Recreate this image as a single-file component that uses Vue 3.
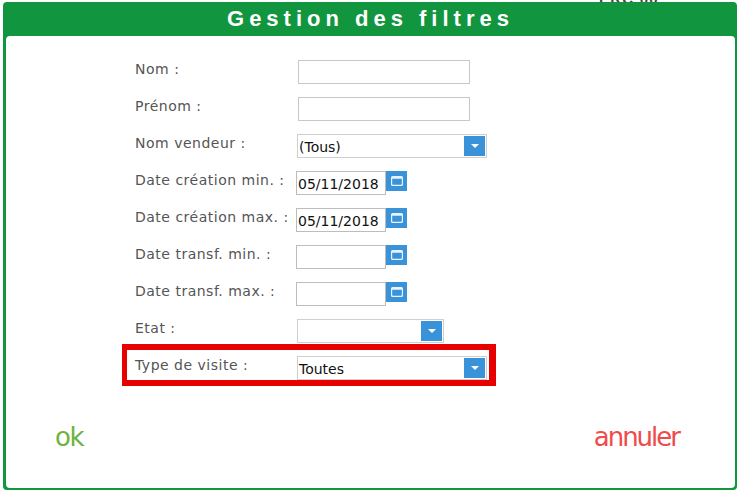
<template>
  <div class="page">
    <span class="behind">ERC 00</span>
    <section class="panel">
      <h1 class="panel-title">Gestion des filtres</h1>
      <div class="panel-body">
        <form class="filters">
          <div v-for="row in rows" :key="row.label" class="row" :class="{ marked: row.marked }">
            <label class="row-label">{{ row.label }}</label>

            <div v-if="row.type === 'text'" class="text-box"></div>

            <div v-else-if="row.type === 'select'" class="select-box" :class="row.size">
              <span class="select-value">{{ row.value }}</span>
              <span class="select-btn">
                <svg width="10" height="6" viewBox="0 0 10 6"><path d="M1 1h8L5 5z" fill="#fff" /></svg>
              </span>
            </div>

            <div v-else class="date-field">
              <div class="date-box">{{ row.value }}</div>
              <span class="date-btn">
                <svg width="12" height="10" viewBox="0 0 12 10">
                  <path d="M1.5 0h9A1.5 1.5 0 0 1 12 1.5v7A1.5 1.5 0 0 1 10.500 10h-9A1.500 1.500 0 0 1 0 8.500v-7A1.500 1.500 0 0 1 1.500 0zM1.200 2.800v5.200c0 .5.3.8.8.8h8c.5 0 .8-.3.8-.8V2.800z" fill="#e8f3fc" fill-rule="evenodd" />
                </svg>
              </span>
            </div>
          </div>
        </form>

        <div class="actions">
          <a class="action ok">ok</a>
          <a class="action cancel">annuler</a>
        </div>
      </div>
    </section>
  </div>
</template>

<script setup>
const rows = [
  { label: 'Nom :', type: 'text' },
  { label: 'Prénom :', type: 'text' },
  { label: 'Nom vendeur :', type: 'select', value: '(Tous)', size: 'wide' },
  { label: 'Date création min. :', type: 'date', value: '05/11/2018' },
  { label: 'Date création max. :', type: 'date', value: '05/11/2018' },
  { label: 'Date transf. min. :', type: 'date', value: '' },
  { label: 'Date transf. max. :', type: 'date', value: '' },
  { label: 'Etat :', type: 'select', value: '', size: 'narrow' },
  { label: 'Type de visite :', type: 'select', value: 'Toutes', size: 'wide', marked: true }
]
</script>

<style>
html, body {
  margin: 0;
  background: #fff;
}
</style>

<style scoped>
.page {
  position: relative;
  width: 745px;
  height: 493px;
  padding: 2px 8px 3px 3px;
  box-sizing: border-box;
  overflow: hidden;
  font-family: "DejaVu Sans", Verdana, sans-serif;
}

.behind {
  position: absolute;
  top: -10px;
  left: 599px;
  font-family: "Liberation Sans", Arial, sans-serif;
  font-size: 15px;
  font-weight: 700;
  letter-spacing: 1.2px;
  color: #444;
}

.panel {
  position: relative;
  display: flex;
  flex-direction: column;
  height: 100%;
  background: #12953f;
  border-radius: 4px;
  padding: 0 2px 2px 3px;
  box-sizing: border-box;
}

.panel-title {
  margin: 0;
  height: 34px;
  line-height: 33px;
  text-align: center;
  font-family: "Liberation Sans", Arial, sans-serif;
  font-size: 22px;
  font-weight: 700;
  letter-spacing: 5px;
  color: #fff;
}

.panel-body {
  flex: 1;
  display: flex;
  flex-direction: column;
  background: #fff;
  border-radius: 4px;
  padding: 24px 0 0 129px;
}

.filters {
  display: flex;
  flex-direction: column;
  gap: 13px;
}

.row {
  position: relative;
  display: flex;
  height: 24px;
}

.row.marked::after {
  content: "";
  position: absolute;
  left: -13px;
  top: -12px;
  width: 374px;
  height: 42px;
  border-style: solid;
  border-color: #e60000;
  border-width: 6px 7px 6px 5px;
  box-sizing: border-box;
}

.row-label {
  width: 163px;
  flex-shrink: 0;
  font-size: 14px;
  line-height: 18px;
  letter-spacing: 0.5px;
  color: #555;
}

.text-box {
  width: 172px;
  height: 24px;
  border: 1px solid #c8c8c8;
  box-sizing: border-box;
}

.select-box {
  display: flex;
  align-items: center;
  justify-content: space-between;
  height: 24px;
  margin-left: -1px;
  padding: 0 1px 0 1px;
  border: 1px solid #cfcfcf;
  box-sizing: border-box;
}

.select-box.wide {
  width: 190px;
}

.select-box.narrow {
  width: 147px;
}

.select-value {
  font-size: 14px;
  line-height: 24px;
  padding-top: 1px;
  color: #111;
}

.select-btn {
  display: flex;
  align-items: center;
  justify-content: center;
  width: 21px;
  height: 20px;
  background: #3a92d8;
}

.date-field {
  display: flex;
  align-items: flex-start;
  margin-left: -2px;
}

.date-box {
  width: 90px;
  height: 24px;
  padding-left: 1px;
  border: 1px solid #bdbdbd;
  box-sizing: border-box;
  font-size: 14px;
  line-height: 25px;
  white-space: nowrap;
  color: #111;
}

.date-btn {
  display: flex;
  align-items: center;
  justify-content: center;
  width: 21px;
  height: 20px;
  background: #3a92d8;
}

.actions {
  display: flex;
  justify-content: space-between;
  align-items: center;
  margin: 42px 56px 0 -80px;
}

.action {
  font-family: "DejaVu Sans", sans-serif;
  font-size: 26px;
  line-height: 30px;
}

.ok {
  color: #6cb33f;
  letter-spacing: -1.5px;
}

.cancel {
  color: #ef4b4b;
  letter-spacing: -2px;
}
</style>
